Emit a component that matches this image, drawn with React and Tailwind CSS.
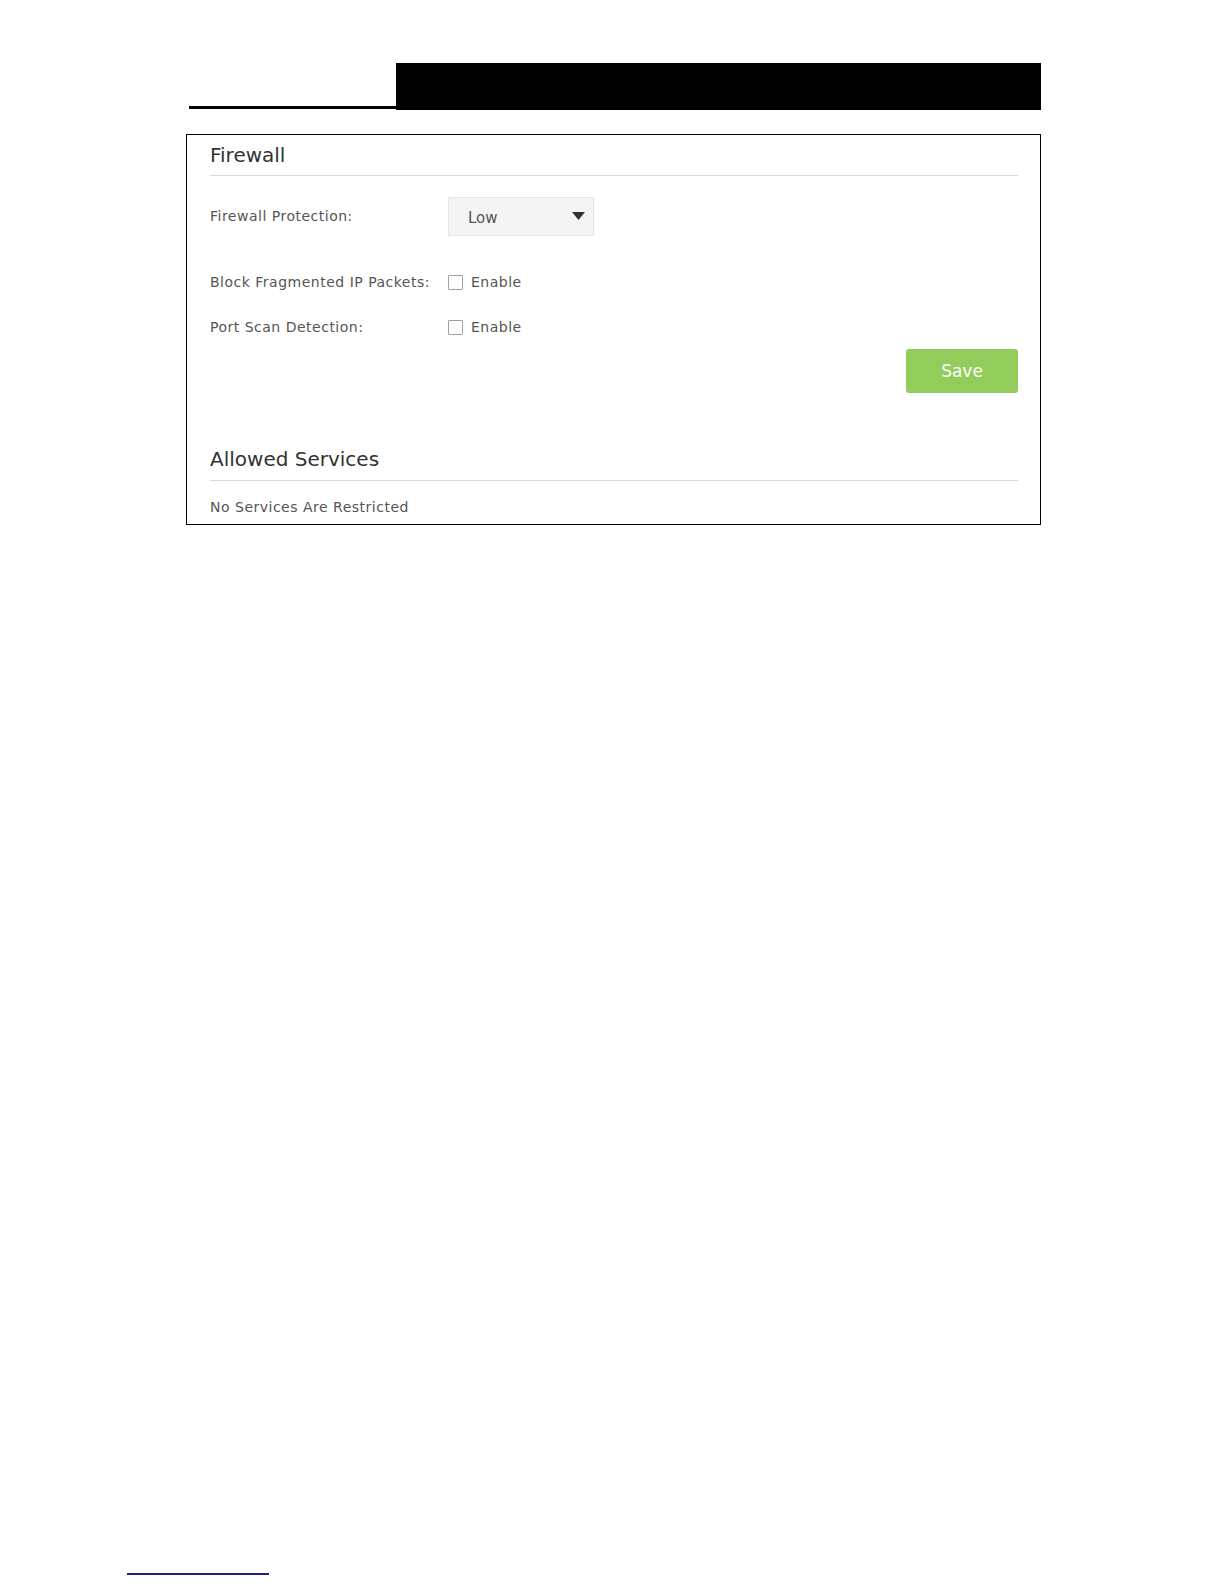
import React from "react";

function Row({ label, children, className = "" }) {
  return (
    <div className={"flex items-center " + className}>
      <div className="w-[238px] text-[14px] tracking-[0.5px] text-[#555]">{label}</div>
      {children}
    </div>
  );
}

function Check() {
  return (
    <label className="flex items-center gap-[8px] text-[14px] tracking-[0.5px] text-[#555]">
      <span className="block w-[15px] h-[15px] border border-[#a0a0a0] bg-white rounded-[1px]" />
      Enable
    </label>
  );
}

export default function App() {
  return (
    <div className="w-[1224px] h-[1584px] bg-white flex flex-col" style={{ fontFamily: '"DejaVu Sans", Verdana, sans-serif' }}>
      <div className="ml-[189px] mt-[63px] w-[852px] flex items-end">
        <div className="w-[207px] h-[3px] bg-black mb-[1px]" />
        <div className="flex-1 h-[47px] bg-black" />
      </div>

      <div className="ml-[186px] mt-[24px] w-[855px] h-[391px] border-[1.5px] border-black pl-[23px] pr-[22px] flex flex-col">
        <div className="pt-[7px] text-[20px] text-[#333] leading-[26px]">Firewall</div>
        <div className="mt-[7px] h-px bg-[#d9d9d9]" />

        <Row label="Firewall Protection:" className="mt-[21px]">
          <div className="w-[146px] h-[39px] bg-[#f4f4f4] border border-[#e6e6e6] flex items-center justify-between pl-[19px] pr-[8px] text-[15px] text-[#555]">
            <span className="mt-[3px]">Low</span>
            <svg width="13" height="8" viewBox="0 0 13 8" className="mt-[-1px]">
              <path d="M0 0 L13 0 L6.5 8 Z" fill="#333" />
            </svg>
          </div>
        </Row>

        <Row label="Block Fragmented IP Packets:" className="mt-[36px]">
          <Check />
        </Row>
        <Row label="Port Scan Detection:" className="mt-[24px]">
          <Check />
        </Row>

        <div className="flex justify-end mt-[11px]">
          <button className="w-[112px] h-[44px] rounded-[3px] bg-[#92cd5c] text-white text-[17px] leading-none">Save</button>
        </div>

        <div className="mt-[53px] text-[20px] text-[#333] leading-[26px]">Allowed Services</div>
        <div className="mt-[8px] h-px bg-[#d9d9d9]" />
        <div className="mt-[16px] text-[14px] tracking-[0.5px] text-[#555]">No Services Are Restricted</div>
      </div>

      <div className="ml-[127px] mt-auto mb-[9px] w-[142px] h-[2px] bg-[#1c1c8a]" />
    </div>
  );
}
